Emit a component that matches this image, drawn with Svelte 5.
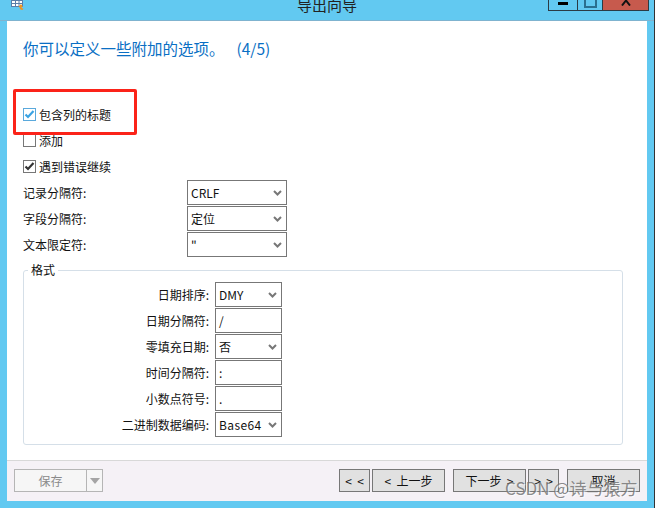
<script>
  const topRows = [
    { label: '记录分隔符:', value: 'CRLF' },
    { label: '字段分隔符:', value: '定位' },
    { label: '文本限定符:', value: '"' }
  ];
  const formatRows = [
    { label: '日期排序:', value: 'DMY', select: true },
    { label: '日期分隔符:', value: '/' },
    { label: '零填充日期:', value: '否', select: true },
    { label: '时间分隔符:', value: ':' },
    { label: '小数点符号:', value: '.' },
    { label: '二进制数据编码:', value: 'Base64', select: true }
  ];
</script>

<div class="desktop">
  <div class="window">
    <header class="titlebar">
      <svg class="app-icon" width="17" height="14" viewBox="0 0 17 14">
        <rect x="2.5" y="0.5" width="11" height="9" fill="#fff" stroke="#5a7ea8" />
        <path d="M2.5 3.5h11M2.5 6.5h11M6.5 0.5v9M10 0.5v9" stroke="#5a7ea8" fill="none" />
        <path d="M12 7l2 3h-1.500c0 1 1 1.500 2 1.500l-1 1.500c-2 0-3-1-3-3h-1z" fill="#f0941e" />
      </svg>
      <span class="title">导出向导</span>
      <div class="controls">
        <span class="ctl min"><i></i></span>
        <span class="ctl max"><i></i></span>
        <span class="ctl close">
          <svg width="10" height="6" viewBox="0 0 10 6"><path d="M1 5.500L5 0.500M9 5.500L5 0.500" stroke="#111" stroke-width="2" fill="none" /></svg>
        </span>
      </div>
    </header>

    <main class="content">
      <h1>你可以定义一些附加的选项。<span class="step">(4/5)</span></h1>

      <div class="checks">
        <div class="check">
          <span class="box on">
            <svg width="11" height="9" viewBox="0 0 11 9"><path d="M1.500 4.500l2.500 2.500 5.500-6" stroke="#3aa3e3" stroke-width="2.200" fill="none" /></svg>
          </span>
          包含列的标题
        </div>
        <div class="check"><span class="box"></span>添加</div>
        <div class="check">
          <span class="box">
            <svg width="11" height="9" viewBox="0 0 11 9"><path d="M1.500 4.500l2.500 2.500 5.500-6" stroke="#333" stroke-width="2.200" fill="none" /></svg>
          </span>
          遇到错误继续
        </div>
      </div>

      <div class="top-rows">
        {#each topRows as row}
          <div class="row">
            <span class="label">{row.label}</span>
            <div class="field wide">
              {row.value}
              <svg class="chev" width="9" height="6" viewBox="0 0 9 6"><path d="M1 1l3.500 3.500L8 1" stroke="#777" stroke-width="2" fill="none" /></svg>
            </div>
          </div>
        {/each}
      </div>

      <fieldset class="format">
        <legend>格式</legend>
        {#each formatRows as row}
          <div class="format-row">
            <span class="label">{row.label}</span>
            <div class="field narrow" class:spaced={row.value === 'Base64'}>
              {row.value}
              {#if row.select}
                <svg class="chev" width="9" height="6" viewBox="0 0 9 6"><path d="M1 1l3.500 3.500L8 1" stroke="#777" stroke-width="2" fill="none" /></svg>
              {/if}
            </div>
          </div>
        {/each}
      </fieldset>

      <div class="callout"></div>
    </main>

    <footer class="footer">
      <div class="save">
        <span class="save-main">保存</span>
        <span class="save-arrow"></span>
      </div>
      <div class="nav">
        <div class="group">
          <button class="short">&lt;&nbsp;&nbsp;&lt;</button>
          <button class="long">&lt;&nbsp;&nbsp;上一步</button>
        </div>
        <div class="group">
          <button class="long">下一步&nbsp;&nbsp;&gt;</button>
          <button class="short">&gt;&nbsp;&nbsp;&gt;</button>
        </div>
        <button class="long">取消</button>
      </div>
    </footer>
  </div>
  <div class="edge"></div>
  <span class="watermark">CSDN @诗与猿方</span>
</div>

<style>
  :global(body) {
    background: #fff;
    font-family: "Noto Sans CJK SC", "Liberation Sans", sans-serif;
    font-size: 12px;
    color: #111;
  }

  .desktop {
    position: relative;
    display: flex;
    width: 657px;
    height: 508px;
    overflow: hidden;
  }

  .window {
    width: 654px;
    height: 508px;
    box-sizing: border-box;
    padding: 0 7px 7px;
    background: #62c9f1;
    display: flex;
    flex-direction: column;
  }

  .edge {
    width: 1px;
    background: #333;
  }

  .titlebar {
    position: relative;
    height: 20px;
    flex: none;
    border-bottom: 1px solid #7fb3cf;
    margin: 0 -7px 0 -7px;
    padding: 0 5px 0 9px;
    box-sizing: content-box;
    display: flex;
    justify-content: space-between;
    overflow: hidden;
  }

  .app-icon {
    margin-top: -3px;
  }

  .title {
    position: absolute;
    left: 297px;
    top: -5px;
    font-size: 15px;
    line-height: 20px;
    color: #222;
  }

  .controls {
    display: flex;
    height: 11px;
    border: 1px solid #2b3b44;
    border-top: none;
    box-sizing: border-box;
  }

  .ctl {
    display: flex;
    justify-content: center;
    overflow: hidden;
    height: 10px;
  }

  .min {
    width: 28px;
    border-right: 1px solid #2b3b44;
  }

  .min i {
    width: 10px;
    height: 3px;
    margin-top: 2px;
    background: #000;
  }

  .max {
    width: 24px;
    border-right: 1px solid #2b3b44;
  }

  .max i {
    width: 9px;
    height: 9px;
    margin-top: -5px;
    border: 2px solid #2a6f8f;
  }

  .close {
    width: 45px;
    background: #c75a4d;
  }

  .close svg {
    margin-top: 0;
  }

  .content {
    position: relative;
    flex: 1;
    background: #fff;
    padding: 16px 16px 0;
  }

  h1 {
    margin: 0;
    font-size: 15.500px;
    font-weight: 400;
    line-height: 22px;
    color: #0a6fc4;
  }

  .step {
    margin-left: 12px;
  }

  .checks {
    margin-top: 49px;
    display: flex;
    flex-direction: column;
    gap: 13px;
  }

  .check {
    display: flex;
    align-items: center;
    gap: 3px;
    height: 13px;
    line-height: 13px;
  }

  .box {
    width: 11px;
    height: 11px;
    border: 1px solid #777;
    background: #fff;
    display: flex;
    align-items: center;
    justify-content: center;
  }

  .box.on {
    border-color: #5aa9dc;
  }

  .top-rows {
    margin-top: 7px;
    display: flex;
    flex-direction: column;
    gap: 1px;
  }

  .row {
    display: flex;
    align-items: center;
  }

  .row .label {
    width: 164px;
  }

  .field {
    position: relative;
    height: 25px;
    box-sizing: border-box;
    border: 1px solid #777;
    background: #fff;
    padding-left: 3px;
    line-height: 23px;
    font-size: 12px;
  }

  .wide {
    width: 100px;
  }

  .narrow {
    width: 67px;
  }

  .spaced {
    letter-spacing: 0.400px;
  }

  .chev {
    position: absolute;
    right: 4px;
    top: 9px;
  }

  .format {
    margin: 6px 0 0;
    padding: 5px 0 0;
    width: 600px;
    height: 182px;
    box-sizing: border-box;
    border: 1px solid #d5dfe8;
    border-radius: 3px;
    display: flex;
    flex-direction: column;
    gap: 1px;
  }

  legend {
    margin-left: 4px;
    padding: 0 3px;
    line-height: 14px;
  }

  .format-row {
    display: flex;
    align-items: center;
    justify-content: flex-end;
    gap: 6px;
    width: 258px;
  }

  .callout {
    position: absolute;
    left: 6px;
    top: 68px;
    width: 124px;
    height: 46px;
    box-sizing: border-box;
    border: 3px solid #fb2319;
    border-radius: 2px;
  }

  .footer {
    flex: none;
    height: 41px;
    box-sizing: border-box;
    border-top: 1px solid #d8d8d8;
    background: #f5f1f6;
    display: flex;
    justify-content: space-between;
    padding: 8px 7px 0;
  }

  .save {
    display: flex;
    width: 89px;
    height: 23px;
    box-sizing: border-box;
    border: 1px solid #b5b5b5;
    background: #f6f6f6;
    color: #8a8a8a;
  }

  .save-main {
    width: 71px;
    text-align: center;
    line-height: 21px;
    border-right: 1px solid #b5b5b5;
    font-size: 12px;
  }

  .save-arrow {
    margin: 8px 0 0 3px;
    width: 0;
    height: 0;
    border-left: 5px solid transparent;
    border-right: 5px solid transparent;
    border-top: 6px solid #a5a5a5;
  }

  .nav {
    display: flex;
    gap: 8px;
  }

  .group {
    display: flex;
    gap: 2px;
  }

  button {
    height: 23px;
    padding: 0;
    box-sizing: border-box;
    border: 1px solid #777;
    border-radius: 0;
    background: #e1e1e1;
    color: #111;
    font: inherit;
    font-size: 12px;
    line-height: 20px;
  }

  .short {
    width: 31px;
  }

  .long {
    width: 73px;
  }

  .watermark {
    position: absolute;
    left: 505px;
    top: 477px;
    font-size: 17px;
    line-height: 22px;
    color: rgba(110, 110, 110, 0.8);
    text-shadow: 1px 1px 1px rgba(255, 255, 255, 0.7);
    white-space: nowrap;
  }
</style>
